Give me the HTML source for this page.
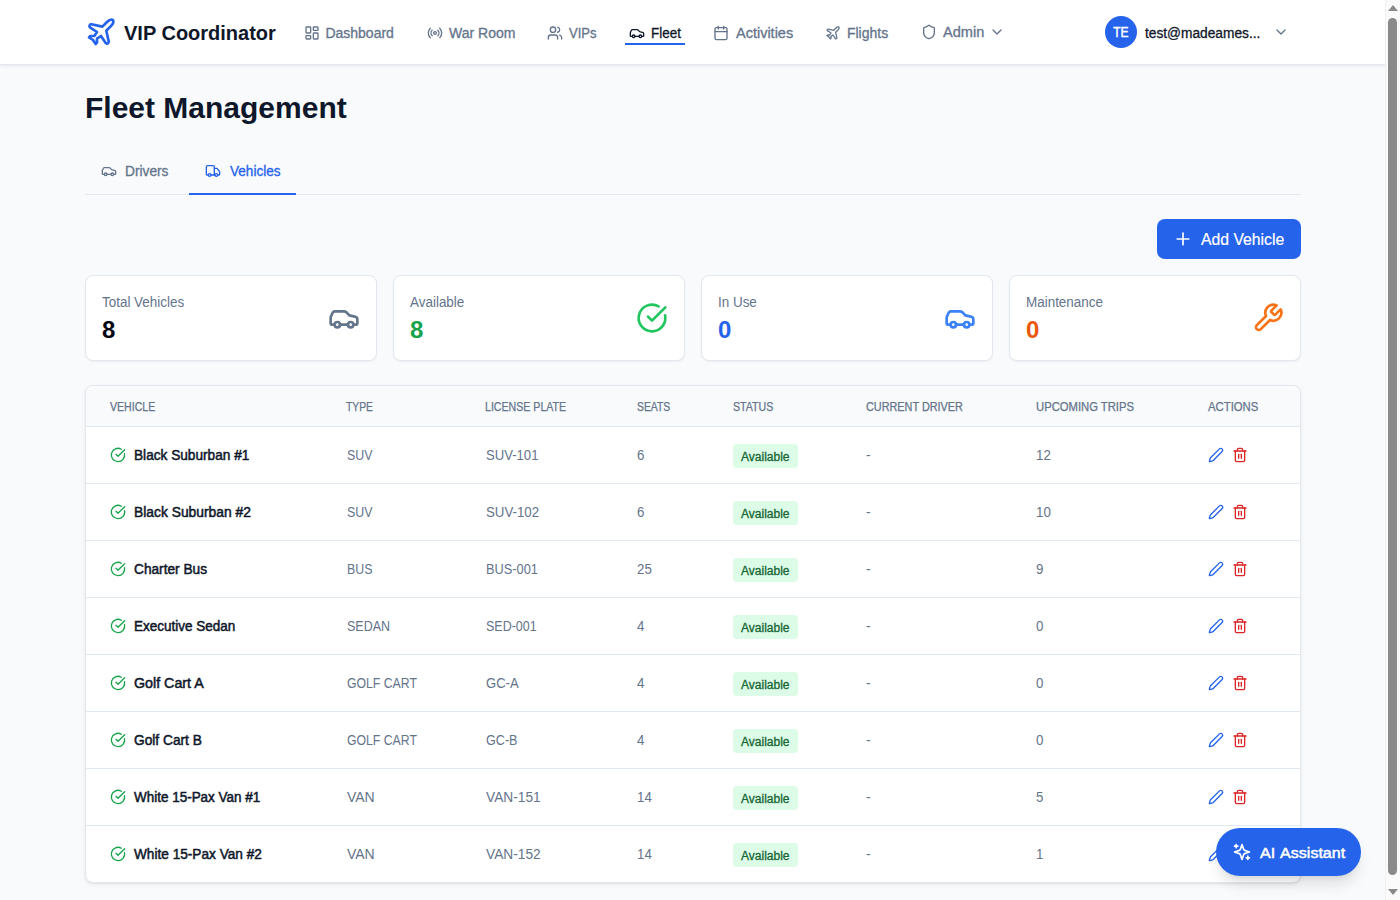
<!DOCTYPE html>
<html><head><meta charset="utf-8"><title>Fleet Management</title>
<style>
*{box-sizing:border-box;margin:0;padding:0}
html,body{width:1400px;height:900px;overflow:hidden}
body{background:#f8fafc;font-family:"Liberation Sans",sans-serif;color:#0f172a;position:relative}
.abs{position:absolute}
.ic{position:absolute;display:block;fill:none;stroke:currentColor;stroke-linecap:round;stroke-linejoin:round;overflow:visible}
.t{position:absolute;white-space:nowrap;transform-origin:0 0}
#hdr{position:absolute;left:0;top:0;width:1385px;height:65px;background:#fff;border-bottom:1px solid #e2e8f0;box-shadow:0 1px 3px rgba(0,0,0,.08)}
.card{position:absolute;background:#fff;border:1px solid #e2e8f0;border-radius:8px;box-shadow:0 1px 2px rgba(0,0,0,.05)}
.tcard{box-shadow:0 1px 2px rgba(0,0,0,.06),0 2px 5px rgba(0,0,0,.05)}
.badge{height:24px;padding:1px 9px 0 8px;border-radius:4px;background:#dcfce7;color:#166534;font-size:12px;line-height:24px;-webkit-text-stroke:0.3px #166534}
</style></head><body>
<div id="hdr"></div>
<svg class="ic" style="left:85px;top:16px;color:#2563eb" width="32" height="32" viewBox="0 0 24 24" stroke-width="2"><path d="M17.8 19.2 16 11l3.5-3.5C21 6 21.5 4 21 3c-1-.5-3 0-4.5 1.5L13 8 4.8 6.2c-.5-.1-.9.1-1.1.5l-.3.5c-.2.5-.1 1 .3 1.3L9 12l-2 3H4l-1 1 3 2 2 3 1-1v-3l3-2 3.5 5.3c.3.4.8.5 1.3.3l.5-.2c.4-.3.6-.7.5-1.2z"/></svg>
<div class="t" style="left:124px;top:21px;font-size:20px;line-height:24px;color:#0f172a;font-weight:700;">VIP Coordinator</div>
<svg class="ic" style="left:303.7px;top:25px;color:#64748b" width="16" height="16" viewBox="0 0 24 24" stroke-width="2"><rect width="7" height="9" x="3" y="3" rx="1"/><rect width="7" height="5" x="14" y="3" rx="1"/><rect width="7" height="9" x="14" y="12" rx="1"/><rect width="7" height="5" x="3" y="16" rx="1"/></svg>
<div class="t" style="left:325.4px;top:24px;font-size:14px;line-height:18px;color:#64748b;font-weight:400;-webkit-text-stroke:0.3px #64748b;">Dashboard</div>
<svg class="ic" style="left:426.7px;top:25px;color:#64748b" width="16" height="16" viewBox="0 0 24 24" stroke-width="2"><path d="M4.9 19.1C1 15.2 1 8.8 4.9 4.9"/><path d="M7.8 16.2c-2.3-2.3-2.3-6.1 0-8.5"/><circle cx="12" cy="12" r="2"/><path d="M16.2 7.8c2.3 2.3 2.3 6.1 0 8.5"/><path d="M19.1 4.9C23 8.8 23 15.1 19.1 19"/></svg>
<div class="t" style="left:449px;top:24px;font-size:14px;line-height:18px;color:#64748b;font-weight:400;-webkit-text-stroke:0.3px #64748b;">War Room</div>
<svg class="ic" style="left:547px;top:25px;color:#64748b" width="16" height="16" viewBox="0 0 24 24" stroke-width="2"><path d="M16 21v-2a4 4 0 0 0-4-4H6a4 4 0 0 0-4 4v2"/><circle cx="9" cy="7" r="4"/><path d="M22 21v-2a4 4 0 0 0-3-3.87"/><path d="M16 3.13a4 4 0 0 1 0 7.75"/></svg>
<div class="t" style="left:569px;top:24px;font-size:14px;line-height:18px;color:#64748b;font-weight:400;transform:scaleX(0.93);-webkit-text-stroke:0.3px #64748b;">VIPs</div>
<svg class="ic" style="left:628.6px;top:25px;color:#0f172a" width="16" height="16" viewBox="0 0 24 24" stroke-width="2"><path d="M19 17h2c.6 0 1-.4 1-1v-3c0-.9-.7-1.7-1.5-1.9C18.7 10.6 16 10 16 10s-1.3-1.4-2.2-2.3c-.5-.4-1.1-.7-1.8-.7H5c-.6 0-1.1.4-1.4.9l-1.4 2.9A3.7 3.7 0 0 0 2 12v4c0 .6.4 1 1 1h2"/><circle cx="7" cy="17" r="2"/><path d="M9 17h6"/><circle cx="17" cy="17" r="2"/></svg>
<div class="t" style="left:651.4px;top:24px;font-size:14px;line-height:18px;color:#0f172a;font-weight:400;transform:scaleX(0.96);-webkit-text-stroke:0.3px #0f172a;">Fleet</div>
<svg class="ic" style="left:712.7px;top:25px;color:#64748b" width="16" height="16" viewBox="0 0 24 24" stroke-width="2"><path d="M8 2v4"/><path d="M16 2v4"/><rect width="18" height="18" x="3" y="4" rx="2"/><path d="M3 10h18"/></svg>
<div class="t" style="left:736px;top:24px;font-size:14px;line-height:18px;color:#64748b;font-weight:400;transform:scaleX(1.035);-webkit-text-stroke:0.3px #64748b;">Activities</div>
<svg class="ic" style="left:824.8px;top:25px;color:#64748b" width="16" height="16" viewBox="0 0 24 24" stroke-width="2"><path d="M17.8 19.2 16 11l3.5-3.5C21 6 21.5 4 21 3c-1-.5-3 0-4.5 1.5L13 8 4.8 6.2c-.5-.1-.9.1-1.1.5l-.3.5c-.2.5-.1 1 .3 1.3L9 12l-2 3H4l-1 1 3 2 2 3 1-1v-3l3-2 3.5 5.3c.3.4.8.5 1.3.3l.5-.2c.4-.3.6-.7.5-1.2z"/></svg>
<div class="t" style="left:846.9px;top:24px;font-size:14px;line-height:18px;color:#64748b;font-weight:400;-webkit-text-stroke:0.3px #64748b;">Flights</div>
<svg class="ic" style="left:920.9px;top:24px;color:#64748b" width="16" height="16" viewBox="0 0 24 24" stroke-width="2"><path d="M20 13c0 5-3.5 7.5-7.66 8.95a1 1 0 0 1-.67-.01C7.5 20.5 4 18 4 13V6a1 1 0 0 1 1-1c2 0 4.5-1.2 6.24-2.72a1.17 1.17 0 0 1 1.52 0C14.51 3.81 17 5 19 5a1 1 0 0 1 1 1z"/></svg>
<div class="t" style="left:943px;top:23px;font-size:14px;line-height:18px;color:#64748b;font-weight:400;transform:scaleX(1.04);-webkit-text-stroke:0.3px #64748b;">Admin</div>
<svg class="ic" style="left:989.3px;top:24px;color:#64748b" width="16" height="16" viewBox="0 0 24 24" stroke-width="2"><path d="m6 9 6 6 6-6"/></svg>
<div class="abs" style="left:625px;top:43px;width:60px;height:2px;background:#2563eb"></div>
<div class="abs" style="left:1105px;top:16px;width:32px;height:32px;border-radius:50%;background:#2563eb"></div>
<div class="t" style="left:1105px;top:23px;font-size:14px;line-height:18px;color:#fff;font-weight:400;-webkit-text-stroke:0.45px #fff;width:32px;text-align:center;transform:scaleX(0.86);transform-origin:15.5px 0;">TE</div>
<div class="t" style="left:1145px;top:24px;font-size:14px;line-height:18px;color:#0f172a;font-weight:400;transform:scaleX(0.98);-webkit-text-stroke:0.3px #0f172a;">test@madeames...</div>
<svg class="ic" style="left:1273px;top:24px;color:#64748b" width="16" height="16" viewBox="0 0 24 24" stroke-width="2"><path d="m6 9 6 6 6-6"/></svg>
<div class="t" style="left:85px;top:90px;font-size:30px;line-height:36px;color:#0f172a;font-weight:700;">Fleet Management</div>
<div class="abs" style="left:85px;top:194px;width:1216px;height:1px;background:#e2e8f0"></div>
<div class="abs" style="left:189px;top:193px;width:107px;height:2px;background:#2563eb"></div>
<svg class="ic" style="left:100.6px;top:163px;color:#64748b" width="16" height="16" viewBox="0 0 24 24" stroke-width="2"><path d="M19 17h2c.6 0 1-.4 1-1v-3c0-.9-.7-1.7-1.5-1.9C18.7 10.6 16 10 16 10s-1.3-1.4-2.2-2.3c-.5-.4-1.1-.7-1.8-.7H5c-.6 0-1.1.4-1.4.9l-1.4 2.9A3.7 3.7 0 0 0 2 12v4c0 .6.4 1 1 1h2"/><circle cx="7" cy="17" r="2"/><path d="M9 17h6"/><circle cx="17" cy="17" r="2"/></svg>
<div class="t" style="left:124.5px;top:162px;font-size:14px;line-height:18px;color:#64748b;font-weight:400;transform:scaleX(0.98);-webkit-text-stroke:0.3px #64748b;">Drivers</div>
<svg class="ic" style="left:205px;top:163px;color:#2563eb" width="16" height="16" viewBox="0 0 24 24" stroke-width="2"><path d="M14 18V6a2 2 0 0 0-2-2H4a2 2 0 0 0-2 2v11a1 1 0 0 0 1 1h2"/><path d="M15 18H9"/><path d="M19 18h2a1 1 0 0 0 1-1v-3.65a1 1 0 0 0-.22-.624l-3.48-4.35A1 1 0 0 0 17.52 8H14"/><circle cx="17" cy="18" r="2"/><circle cx="7" cy="18" r="2"/></svg>
<div class="t" style="left:229.5px;top:162px;font-size:14px;line-height:18px;color:#2563eb;font-weight:400;transform:scaleX(0.97);-webkit-text-stroke:0.3px #2563eb;">Vehicles</div>
<div class="abs" style="left:1157px;top:219px;width:144px;height:40px;border-radius:8px;background:#2563eb"></div>
<svg class="ic" style="left:1173.2px;top:229.3px;color:#fff" width="20" height="20" viewBox="0 0 24 24" stroke-width="2"><path d="M5 12h14"/><path d="M12 5v14"/></svg>
<div class="t" style="left:1200.5px;top:230px;font-size:16px;line-height:20px;color:#fff;font-weight:400;transform:scaleX(0.985);-webkit-text-stroke:0.2px #fff;">Add Vehicle</div>
<div class="card" style="left:85px;top:275px;width:292px;height:86px"></div>
<div class="t" style="left:102px;top:292px;font-size:14px;line-height:20px;color:#64748b;font-weight:400;transform:scaleX(0.96);">Total Vehicles</div>
<div class="t" style="left:102px;top:314px;font-size:24px;line-height:32px;color:#030712;font-weight:700;">8</div>
<svg class="ic" style="left:328px;top:302px;color:#64748b" width="32" height="32" viewBox="0 0 24 24" stroke-width="2"><path d="M19 17h2c.6 0 1-.4 1-1v-3c0-.9-.7-1.7-1.5-1.9C18.7 10.6 16 10 16 10s-1.3-1.4-2.2-2.3c-.5-.4-1.1-.7-1.8-.7H5c-.6 0-1.1.4-1.4.9l-1.4 2.9A3.7 3.7 0 0 0 2 12v4c0 .6.4 1 1 1h2"/><circle cx="7" cy="17" r="2"/><path d="M9 17h6"/><circle cx="17" cy="17" r="2"/></svg>
<div class="card" style="left:393px;top:275px;width:292px;height:86px"></div>
<div class="t" style="left:410px;top:292px;font-size:14px;line-height:20px;color:#64748b;font-weight:400;transform:scaleX(0.96);">Available</div>
<div class="t" style="left:410px;top:314px;font-size:24px;line-height:32px;color:#16a34a;font-weight:700;">8</div>
<svg class="ic" style="left:636px;top:302px;color:#22c55e" width="32" height="32" viewBox="0 0 24 24" stroke-width="2"><path d="M21.801 10A10 10 0 1 1 17 3.335"/><path d="m9 11 3 3L22 4"/></svg>
<div class="card" style="left:701px;top:275px;width:292px;height:86px"></div>
<div class="t" style="left:718px;top:292px;font-size:14px;line-height:20px;color:#64748b;font-weight:400;transform:scaleX(0.96);">In Use</div>
<div class="t" style="left:718px;top:314px;font-size:24px;line-height:32px;color:#2563eb;font-weight:700;">0</div>
<svg class="ic" style="left:944px;top:302px;color:#3b82f6" width="32" height="32" viewBox="0 0 24 24" stroke-width="2"><path d="M19 17h2c.6 0 1-.4 1-1v-3c0-.9-.7-1.7-1.5-1.9C18.7 10.6 16 10 16 10s-1.3-1.4-2.2-2.3c-.5-.4-1.1-.7-1.8-.7H5c-.6 0-1.1.4-1.4.9l-1.4 2.9A3.7 3.7 0 0 0 2 12v4c0 .6.4 1 1 1h2"/><circle cx="7" cy="17" r="2"/><path d="M9 17h6"/><circle cx="17" cy="17" r="2"/></svg>
<div class="card" style="left:1009px;top:275px;width:292px;height:86px"></div>
<div class="t" style="left:1026px;top:292px;font-size:14px;line-height:20px;color:#64748b;font-weight:400;transform:scaleX(0.96);">Maintenance</div>
<div class="t" style="left:1026px;top:314px;font-size:24px;line-height:32px;color:#ea580c;font-weight:700;">0</div>
<svg class="ic" style="left:1252px;top:302px;color:#f97316" width="32" height="32" viewBox="0 0 24 24" stroke-width="2"><path d="M14.7 6.3a1 1 0 0 0 0 1.4l1.6 1.6a1 1 0 0 0 1.4 0l3.77-3.77a6 6 0 0 1-7.94 7.94l-6.91 6.91a2.12 2.12 0 0 1-3-3l6.91-6.91a6 6 0 0 1 7.94-7.94l-3.76 3.76z"/></svg>
<div class="card tcard" style="left:85px;top:385px;width:1216px;height:498px;overflow:hidden"><div style="height:41px;background:#f8fafc;border-bottom:1px solid #e2e8f0"></div></div>
<div class="t" style="left:109.5px;top:399px;font-size:12px;line-height:16px;color:#64748b;font-weight:400;transform:scaleX(0.88);-webkit-text-stroke:0.25px #64748b;">VEHICLE</div>
<div class="t" style="left:346.3px;top:399px;font-size:12px;line-height:16px;color:#64748b;font-weight:400;transform:scaleX(0.86);-webkit-text-stroke:0.25px #64748b;">TYPE</div>
<div class="t" style="left:485.0px;top:399px;font-size:12px;line-height:16px;color:#64748b;font-weight:400;transform:scaleX(0.884);-webkit-text-stroke:0.25px #64748b;">LICENSE PLATE</div>
<div class="t" style="left:637.0px;top:399px;font-size:12px;line-height:16px;color:#64748b;font-weight:400;transform:scaleX(0.866);-webkit-text-stroke:0.25px #64748b;">SEATS</div>
<div class="t" style="left:733.1px;top:399px;font-size:12px;line-height:16px;color:#64748b;font-weight:400;transform:scaleX(0.885);-webkit-text-stroke:0.25px #64748b;">STATUS</div>
<div class="t" style="left:865.6px;top:399px;font-size:12px;line-height:16px;color:#64748b;font-weight:400;transform:scaleX(0.905);-webkit-text-stroke:0.25px #64748b;">CURRENT DRIVER</div>
<div class="t" style="left:1036.1px;top:399px;font-size:12px;line-height:16px;color:#64748b;font-weight:400;transform:scaleX(0.938);-webkit-text-stroke:0.25px #64748b;">UPCOMING TRIPS</div>
<div class="t" style="left:1207.7px;top:399px;font-size:12px;line-height:16px;color:#64748b;font-weight:400;transform:scaleX(0.943);-webkit-text-stroke:0.25px #64748b;">ACTIONS</div>
<svg class="ic" style="left:109.7px;top:447px;color:#16a34a" width="16" height="16" viewBox="0 0 24 24" stroke-width="2"><path d="M21.801 10A10 10 0 1 1 17 3.335"/><path d="m9 11 3 3L22 4"/></svg>
<div class="t" style="left:133.5px;top:445px;font-size:14px;line-height:20px;color:#0f172a;font-weight:400;transform:scaleX(0.975);-webkit-text-stroke:0.5px #0f172a;">Black Suburban #1</div>
<div class="t" style="left:346.5px;top:445px;font-size:14px;line-height:20px;color:#64748b;font-weight:400;transform:scaleX(0.883);">SUV</div>
<div class="t" style="left:485.5px;top:445px;font-size:14px;line-height:20px;color:#64748b;font-weight:400;transform:scaleX(0.936);">SUV-101</div>
<div class="t" style="left:637px;top:445px;font-size:14px;line-height:20px;color:#64748b;font-weight:400;transform:scaleX(0.95);">6</div>
<div class="abs badge" style="left:733px;top:444px">Available</div>
<div class="t" style="left:866px;top:445px;font-size:14px;line-height:20px;color:#64748b;font-weight:400;">-</div>
<div class="t" style="left:1036px;top:445px;font-size:14px;line-height:20px;color:#64748b;font-weight:400;transform:scaleX(0.95);">12</div>
<svg class="ic" style="left:1208px;top:447px;color:#2563eb" width="16" height="16" viewBox="0 0 24 24" stroke-width="2"><path d="M21.174 6.812a1 1 0 0 0-3.986-3.987L3.842 16.174a2 2 0 0 0-.5.83l-1.321 4.352a.5.5 0 0 0 .623.622l4.353-1.32a2 2 0 0 0 .83-.497z"/></svg>
<svg class="ic" style="left:1232.3px;top:447px;color:#dc2626" width="16" height="16" viewBox="0 0 24 24" stroke-width="2"><path d="M3 6h18"/><path d="M19 6v14c0 1-1 2-2 2H7c-1 0-2-1-2-2V6"/><path d="M8 6V4c0-1 1-2 2-2h4c1 0 2 1 2 2v2"/><line x1="10" x2="10" y1="11" y2="17"/><line x1="14" x2="14" y1="11" y2="17"/></svg>
<div class="abs" style="left:86px;top:483px;width:1214px;height:1px;background:#e2e8f0"></div>
<svg class="ic" style="left:109.7px;top:504px;color:#16a34a" width="16" height="16" viewBox="0 0 24 24" stroke-width="2"><path d="M21.801 10A10 10 0 1 1 17 3.335"/><path d="m9 11 3 3L22 4"/></svg>
<div class="t" style="left:133.5px;top:502px;font-size:14px;line-height:20px;color:#0f172a;font-weight:400;transform:scaleX(0.988);-webkit-text-stroke:0.5px #0f172a;">Black Suburban #2</div>
<div class="t" style="left:346.5px;top:502px;font-size:14px;line-height:20px;color:#64748b;font-weight:400;transform:scaleX(0.883);">SUV</div>
<div class="t" style="left:485.5px;top:502px;font-size:14px;line-height:20px;color:#64748b;font-weight:400;transform:scaleX(0.948);">SUV-102</div>
<div class="t" style="left:637px;top:502px;font-size:14px;line-height:20px;color:#64748b;font-weight:400;transform:scaleX(0.95);">6</div>
<div class="abs badge" style="left:733px;top:501px">Available</div>
<div class="t" style="left:866px;top:502px;font-size:14px;line-height:20px;color:#64748b;font-weight:400;">-</div>
<div class="t" style="left:1036px;top:502px;font-size:14px;line-height:20px;color:#64748b;font-weight:400;transform:scaleX(0.95);">10</div>
<svg class="ic" style="left:1208px;top:504px;color:#2563eb" width="16" height="16" viewBox="0 0 24 24" stroke-width="2"><path d="M21.174 6.812a1 1 0 0 0-3.986-3.987L3.842 16.174a2 2 0 0 0-.5.83l-1.321 4.352a.5.5 0 0 0 .623.622l4.353-1.32a2 2 0 0 0 .83-.497z"/></svg>
<svg class="ic" style="left:1232.3px;top:504px;color:#dc2626" width="16" height="16" viewBox="0 0 24 24" stroke-width="2"><path d="M3 6h18"/><path d="M19 6v14c0 1-1 2-2 2H7c-1 0-2-1-2-2V6"/><path d="M8 6V4c0-1 1-2 2-2h4c1 0 2 1 2 2v2"/><line x1="10" x2="10" y1="11" y2="17"/><line x1="14" x2="14" y1="11" y2="17"/></svg>
<div class="abs" style="left:86px;top:540px;width:1214px;height:1px;background:#e2e8f0"></div>
<svg class="ic" style="left:109.7px;top:561px;color:#16a34a" width="16" height="16" viewBox="0 0 24 24" stroke-width="2"><path d="M21.801 10A10 10 0 1 1 17 3.335"/><path d="m9 11 3 3L22 4"/></svg>
<div class="t" style="left:133.5px;top:559px;font-size:14px;line-height:20px;color:#0f172a;font-weight:400;transform:scaleX(0.977);-webkit-text-stroke:0.5px #0f172a;">Charter Bus</div>
<div class="t" style="left:346.5px;top:559px;font-size:14px;line-height:20px;color:#64748b;font-weight:400;transform:scaleX(0.882);">BUS</div>
<div class="t" style="left:485.5px;top:559px;font-size:14px;line-height:20px;color:#64748b;font-weight:400;transform:scaleX(0.913);">BUS-001</div>
<div class="t" style="left:637px;top:559px;font-size:14px;line-height:20px;color:#64748b;font-weight:400;transform:scaleX(0.95);">25</div>
<div class="abs badge" style="left:733px;top:558px">Available</div>
<div class="t" style="left:866px;top:559px;font-size:14px;line-height:20px;color:#64748b;font-weight:400;">-</div>
<div class="t" style="left:1036px;top:559px;font-size:14px;line-height:20px;color:#64748b;font-weight:400;transform:scaleX(0.95);">9</div>
<svg class="ic" style="left:1208px;top:561px;color:#2563eb" width="16" height="16" viewBox="0 0 24 24" stroke-width="2"><path d="M21.174 6.812a1 1 0 0 0-3.986-3.987L3.842 16.174a2 2 0 0 0-.5.83l-1.321 4.352a.5.5 0 0 0 .623.622l4.353-1.32a2 2 0 0 0 .83-.497z"/></svg>
<svg class="ic" style="left:1232.3px;top:561px;color:#dc2626" width="16" height="16" viewBox="0 0 24 24" stroke-width="2"><path d="M3 6h18"/><path d="M19 6v14c0 1-1 2-2 2H7c-1 0-2-1-2-2V6"/><path d="M8 6V4c0-1 1-2 2-2h4c1 0 2 1 2 2v2"/><line x1="10" x2="10" y1="11" y2="17"/><line x1="14" x2="14" y1="11" y2="17"/></svg>
<div class="abs" style="left:86px;top:597px;width:1214px;height:1px;background:#e2e8f0"></div>
<svg class="ic" style="left:109.7px;top:618px;color:#16a34a" width="16" height="16" viewBox="0 0 24 24" stroke-width="2"><path d="M21.801 10A10 10 0 1 1 17 3.335"/><path d="m9 11 3 3L22 4"/></svg>
<div class="t" style="left:133.5px;top:616px;font-size:14px;line-height:20px;color:#0f172a;font-weight:400;transform:scaleX(0.964);-webkit-text-stroke:0.5px #0f172a;">Executive Sedan</div>
<div class="t" style="left:346.5px;top:616px;font-size:14px;line-height:20px;color:#64748b;font-weight:400;transform:scaleX(0.892);">SEDAN</div>
<div class="t" style="left:485.5px;top:616px;font-size:14px;line-height:20px;color:#64748b;font-weight:400;transform:scaleX(0.892);">SED-001</div>
<div class="t" style="left:637px;top:616px;font-size:14px;line-height:20px;color:#64748b;font-weight:400;transform:scaleX(0.95);">4</div>
<div class="abs badge" style="left:733px;top:615px">Available</div>
<div class="t" style="left:866px;top:616px;font-size:14px;line-height:20px;color:#64748b;font-weight:400;">-</div>
<div class="t" style="left:1036px;top:616px;font-size:14px;line-height:20px;color:#64748b;font-weight:400;transform:scaleX(0.95);">0</div>
<svg class="ic" style="left:1208px;top:618px;color:#2563eb" width="16" height="16" viewBox="0 0 24 24" stroke-width="2"><path d="M21.174 6.812a1 1 0 0 0-3.986-3.987L3.842 16.174a2 2 0 0 0-.5.83l-1.321 4.352a.5.5 0 0 0 .623.622l4.353-1.32a2 2 0 0 0 .83-.497z"/></svg>
<svg class="ic" style="left:1232.3px;top:618px;color:#dc2626" width="16" height="16" viewBox="0 0 24 24" stroke-width="2"><path d="M3 6h18"/><path d="M19 6v14c0 1-1 2-2 2H7c-1 0-2-1-2-2V6"/><path d="M8 6V4c0-1 1-2 2-2h4c1 0 2 1 2 2v2"/><line x1="10" x2="10" y1="11" y2="17"/><line x1="14" x2="14" y1="11" y2="17"/></svg>
<div class="abs" style="left:86px;top:654px;width:1214px;height:1px;background:#e2e8f0"></div>
<svg class="ic" style="left:109.7px;top:675px;color:#16a34a" width="16" height="16" viewBox="0 0 24 24" stroke-width="2"><path d="M21.801 10A10 10 0 1 1 17 3.335"/><path d="m9 11 3 3L22 4"/></svg>
<div class="t" style="left:133.5px;top:673px;font-size:14px;line-height:20px;color:#0f172a;font-weight:400;transform:scaleX(1.018);-webkit-text-stroke:0.5px #0f172a;">Golf Cart A</div>
<div class="t" style="left:346.5px;top:673px;font-size:14px;line-height:20px;color:#64748b;font-weight:400;transform:scaleX(0.875);">GOLF CART</div>
<div class="t" style="left:485.5px;top:673px;font-size:14px;line-height:20px;color:#64748b;font-weight:400;transform:scaleX(0.932);">GC-A</div>
<div class="t" style="left:637px;top:673px;font-size:14px;line-height:20px;color:#64748b;font-weight:400;transform:scaleX(0.95);">4</div>
<div class="abs badge" style="left:733px;top:672px">Available</div>
<div class="t" style="left:866px;top:673px;font-size:14px;line-height:20px;color:#64748b;font-weight:400;">-</div>
<div class="t" style="left:1036px;top:673px;font-size:14px;line-height:20px;color:#64748b;font-weight:400;transform:scaleX(0.95);">0</div>
<svg class="ic" style="left:1208px;top:675px;color:#2563eb" width="16" height="16" viewBox="0 0 24 24" stroke-width="2"><path d="M21.174 6.812a1 1 0 0 0-3.986-3.987L3.842 16.174a2 2 0 0 0-.5.83l-1.321 4.352a.5.5 0 0 0 .623.622l4.353-1.32a2 2 0 0 0 .83-.497z"/></svg>
<svg class="ic" style="left:1232.3px;top:675px;color:#dc2626" width="16" height="16" viewBox="0 0 24 24" stroke-width="2"><path d="M3 6h18"/><path d="M19 6v14c0 1-1 2-2 2H7c-1 0-2-1-2-2V6"/><path d="M8 6V4c0-1 1-2 2-2h4c1 0 2 1 2 2v2"/><line x1="10" x2="10" y1="11" y2="17"/><line x1="14" x2="14" y1="11" y2="17"/></svg>
<div class="abs" style="left:86px;top:711px;width:1214px;height:1px;background:#e2e8f0"></div>
<svg class="ic" style="left:109.7px;top:732px;color:#16a34a" width="16" height="16" viewBox="0 0 24 24" stroke-width="2"><path d="M21.801 10A10 10 0 1 1 17 3.335"/><path d="m9 11 3 3L22 4"/></svg>
<div class="t" style="left:133.5px;top:730px;font-size:14px;line-height:20px;color:#0f172a;font-weight:400;transform:scaleX(0.98);-webkit-text-stroke:0.5px #0f172a;">Golf Cart B</div>
<div class="t" style="left:346.5px;top:730px;font-size:14px;line-height:20px;color:#64748b;font-weight:400;transform:scaleX(0.875);">GOLF CART</div>
<div class="t" style="left:485.5px;top:730px;font-size:14px;line-height:20px;color:#64748b;font-weight:400;transform:scaleX(0.9);">GC-B</div>
<div class="t" style="left:637px;top:730px;font-size:14px;line-height:20px;color:#64748b;font-weight:400;transform:scaleX(0.95);">4</div>
<div class="abs badge" style="left:733px;top:729px">Available</div>
<div class="t" style="left:866px;top:730px;font-size:14px;line-height:20px;color:#64748b;font-weight:400;">-</div>
<div class="t" style="left:1036px;top:730px;font-size:14px;line-height:20px;color:#64748b;font-weight:400;transform:scaleX(0.95);">0</div>
<svg class="ic" style="left:1208px;top:732px;color:#2563eb" width="16" height="16" viewBox="0 0 24 24" stroke-width="2"><path d="M21.174 6.812a1 1 0 0 0-3.986-3.987L3.842 16.174a2 2 0 0 0-.5.83l-1.321 4.352a.5.5 0 0 0 .623.622l4.353-1.32a2 2 0 0 0 .83-.497z"/></svg>
<svg class="ic" style="left:1232.3px;top:732px;color:#dc2626" width="16" height="16" viewBox="0 0 24 24" stroke-width="2"><path d="M3 6h18"/><path d="M19 6v14c0 1-1 2-2 2H7c-1 0-2-1-2-2V6"/><path d="M8 6V4c0-1 1-2 2-2h4c1 0 2 1 2 2v2"/><line x1="10" x2="10" y1="11" y2="17"/><line x1="14" x2="14" y1="11" y2="17"/></svg>
<div class="abs" style="left:86px;top:768px;width:1214px;height:1px;background:#e2e8f0"></div>
<svg class="ic" style="left:109.7px;top:789px;color:#16a34a" width="16" height="16" viewBox="0 0 24 24" stroke-width="2"><path d="M21.801 10A10 10 0 1 1 17 3.335"/><path d="m9 11 3 3L22 4"/></svg>
<div class="t" style="left:133.5px;top:787px;font-size:14px;line-height:20px;color:#0f172a;font-weight:400;transform:scaleX(0.962);-webkit-text-stroke:0.5px #0f172a;">White 15-Pax Van #1</div>
<div class="t" style="left:346.5px;top:787px;font-size:14px;line-height:20px;color:#64748b;font-weight:400;transform:scaleX(0.998);">VAN</div>
<div class="t" style="left:485.5px;top:787px;font-size:14px;line-height:20px;color:#64748b;font-weight:400;transform:scaleX(0.98);">VAN-151</div>
<div class="t" style="left:637px;top:787px;font-size:14px;line-height:20px;color:#64748b;font-weight:400;transform:scaleX(0.95);">14</div>
<div class="abs badge" style="left:733px;top:786px">Available</div>
<div class="t" style="left:866px;top:787px;font-size:14px;line-height:20px;color:#64748b;font-weight:400;">-</div>
<div class="t" style="left:1036px;top:787px;font-size:14px;line-height:20px;color:#64748b;font-weight:400;transform:scaleX(0.95);">5</div>
<svg class="ic" style="left:1208px;top:789px;color:#2563eb" width="16" height="16" viewBox="0 0 24 24" stroke-width="2"><path d="M21.174 6.812a1 1 0 0 0-3.986-3.987L3.842 16.174a2 2 0 0 0-.5.83l-1.321 4.352a.5.5 0 0 0 .623.622l4.353-1.32a2 2 0 0 0 .83-.497z"/></svg>
<svg class="ic" style="left:1232.3px;top:789px;color:#dc2626" width="16" height="16" viewBox="0 0 24 24" stroke-width="2"><path d="M3 6h18"/><path d="M19 6v14c0 1-1 2-2 2H7c-1 0-2-1-2-2V6"/><path d="M8 6V4c0-1 1-2 2-2h4c1 0 2 1 2 2v2"/><line x1="10" x2="10" y1="11" y2="17"/><line x1="14" x2="14" y1="11" y2="17"/></svg>
<div class="abs" style="left:86px;top:825px;width:1214px;height:1px;background:#e2e8f0"></div>
<svg class="ic" style="left:109.7px;top:846px;color:#16a34a" width="16" height="16" viewBox="0 0 24 24" stroke-width="2"><path d="M21.801 10A10 10 0 1 1 17 3.335"/><path d="m9 11 3 3L22 4"/></svg>
<div class="t" style="left:133.5px;top:844px;font-size:14px;line-height:20px;color:#0f172a;font-weight:400;transform:scaleX(0.974);-webkit-text-stroke:0.5px #0f172a;">White 15-Pax Van #2</div>
<div class="t" style="left:346.5px;top:844px;font-size:14px;line-height:20px;color:#64748b;font-weight:400;transform:scaleX(0.998);">VAN</div>
<div class="t" style="left:485.5px;top:844px;font-size:14px;line-height:20px;color:#64748b;font-weight:400;transform:scaleX(0.98);">VAN-152</div>
<div class="t" style="left:637px;top:844px;font-size:14px;line-height:20px;color:#64748b;font-weight:400;transform:scaleX(0.95);">14</div>
<div class="abs badge" style="left:733px;top:843px">Available</div>
<div class="t" style="left:866px;top:844px;font-size:14px;line-height:20px;color:#64748b;font-weight:400;">-</div>
<div class="t" style="left:1036px;top:844px;font-size:14px;line-height:20px;color:#64748b;font-weight:400;transform:scaleX(0.95);">1</div>
<svg class="ic" style="left:1208px;top:846px;color:#2563eb" width="16" height="16" viewBox="0 0 24 24" stroke-width="2"><path d="M21.174 6.812a1 1 0 0 0-3.986-3.987L3.842 16.174a2 2 0 0 0-.5.83l-1.321 4.352a.5.5 0 0 0 .623.622l4.353-1.32a2 2 0 0 0 .83-.497z"/></svg>
<svg class="ic" style="left:1232.3px;top:846px;color:#dc2626" width="16" height="16" viewBox="0 0 24 24" stroke-width="2"><path d="M3 6h18"/><path d="M19 6v14c0 1-1 2-2 2H7c-1 0-2-1-2-2V6"/><path d="M8 6V4c0-1 1-2 2-2h4c1 0 2 1 2 2v2"/><line x1="10" x2="10" y1="11" y2="17"/><line x1="14" x2="14" y1="11" y2="17"/></svg>
<div class="abs" style="left:1216px;top:828px;width:145px;height:48px;border-radius:24px;background:#2563eb;box-shadow:0 10px 15px -3px rgba(0,0,0,.12),0 4px 6px -4px rgba(0,0,0,.1)"></div>
<svg class="ic" style="left:1232px;top:842px;color:#fff" width="20" height="20" viewBox="0 0 24 24" stroke-width="2"><path d="m12 3-1.912 5.813a2 2 0 0 1-1.275 1.275L3 12l5.813 1.912a2 2 0 0 1 1.275 1.275L12 21l1.912-5.813a2 2 0 0 1 1.275-1.275L21 12l-5.813-1.912a2 2 0 0 1-1.275-1.275L12 3Z"/><path d="M5 3v4"/><path d="M19 17v4"/><path d="M3 5h4"/><path d="M17 19h4"/></svg>
<div class="t" style="left:1259.5px;top:843px;font-size:15.5px;line-height:20px;color:#fff;font-weight:400;transform:scaleX(1.035);-webkit-text-stroke:0.5px #fff;word-spacing:1.3px;">AI Assistant</div>
<div class="abs" style="left:1385px;top:0;width:15px;height:900px;background:#fafafa;border-left:1px solid #f0f0f0"></div>
<div class="abs" style="left:1388px;top:18px;width:9px;height:857px;border-radius:4.5px;background:#8a8a8a"></div>
<div class="abs" style="left:1387.5px;top:5px;width:0;height:0;border-left:5px solid transparent;border-right:5px solid transparent;border-bottom:6px solid #8a8a8a"></div>
<div class="abs" style="left:1387.5px;top:889px;width:0;height:0;border-left:5px solid transparent;border-right:5px solid transparent;border-top:6px solid #8a8a8a"></div>
</body></html>
